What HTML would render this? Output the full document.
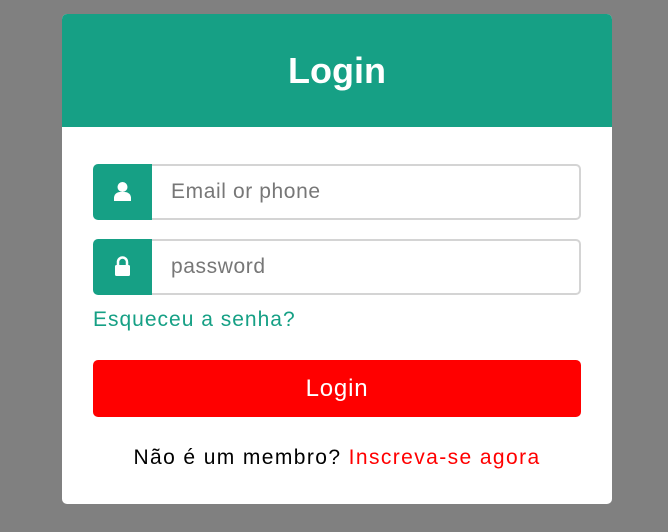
<!DOCTYPE html>
<html><head><meta charset="utf-8"><style>
*{margin:0;padding:0;box-sizing:border-box}
body{width:668px;height:532px;background:#808080;font-family:"Liberation Sans",sans-serif;position:relative;overflow:hidden}
.card{position:absolute;left:62px;top:14px;width:550px;height:490px;background:#fff;border-radius:5px;overflow:hidden}
.hd{height:113px;background:#16a085;color:#fff;font-size:36px;font-weight:bold;text-align:center;line-height:113px}
.row{position:absolute;left:31px;width:488px;height:56px}
.ic{position:absolute;left:0;top:0;width:59px;height:56px;background:#16a085;border-radius:5px 0 0 5px}
.inp{position:absolute;left:59px;top:0;right:0;height:56px;border:2px solid #d4d4d4;border-left:none;border-radius:0 5px 5px 0}
.ph{position:absolute;left:78px;top:0;line-height:56px;font-size:21px;color:#777;letter-spacing:0.6px}
.lnk{position:absolute;left:31px;top:294px;font-size:21px;color:#16a085;letter-spacing:1px}
.btn{position:absolute;left:31px;top:346px;width:488px;height:57px;background:#ff0000;border-radius:5px;color:#fff;font-size:24px;text-align:center;line-height:57px;letter-spacing:0.8px}
.ft{position:absolute;left:0;width:550px;top:432px;text-align:center;font-size:21px;color:#000;letter-spacing:1.4px}
.ft span{color:#ff0000}
</style></head><body>
<div class="card">
<div class="hd">Login</div>
<div class="row" style="top:150px"><div class="inp"></div><div class="ic"><svg width="59" height="56" viewBox="0 0 59 56"><circle cx="29.5" cy="23" r="5" fill="#fff"/><path d="M21 37v-3a6 6 0 0 1 6-6h5a6 6 0 0 1 6 6v3z" fill="#fff"/></svg></div><div class="ph">Email or phone</div></div>
<div class="row" style="top:225px"><div class="inp"></div><div class="ic"><svg width="59" height="56" viewBox="0 0 59 56"><path d="M25 26v-3a4.5 4.5 0 0 1 9 0v3" stroke="#fff" stroke-width="2.5" fill="none"/><rect x="22" y="26" width="15" height="11" rx="1.5" fill="#fff"/></svg></div><div class="ph">password</div></div>
<div class="lnk">Esqueceu a senha?</div>
<div class="btn">Login</div>
<div class="ft">Não é um membro? <span>Inscreva-se agora</span></div>
</div>
</body></html>
